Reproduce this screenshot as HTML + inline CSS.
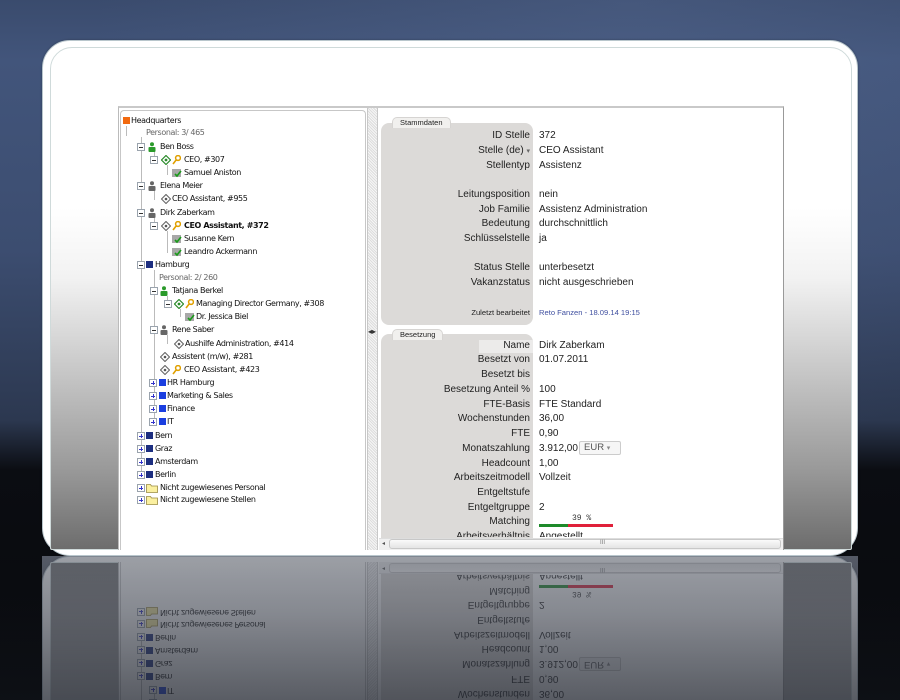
<!DOCTYPE html>
<html><head><meta charset="utf-8">
<style>
*{margin:0;padding:0;box-sizing:border-box}
html,body{width:900px;height:700px;overflow:hidden}
body{position:relative;font-family:"Liberation Sans",Arial,sans-serif;
background:linear-gradient(180deg,#3a4b6d 0px,#42557b 60px,#3c4d70 250px,#2c3850 420px,#0b0d12 470px,#08090c 700px);}
.bgglow{position:absolute;left:0;top:0;width:900px;height:560px;background:radial-gradient(ellipse at 70% 0%,rgba(90,110,150,.35),rgba(0,0,0,0) 60%)}
.scene{position:absolute;left:0;top:0;width:900px;height:560px;overflow:hidden}
.frame{position:absolute;left:42px;top:40px;width:816px;height:516px;border-radius:28px;background:#fff;border:1px solid #b9c6cc;box-shadow:0 0 2px rgba(0,0,0,.3)}
.inner{position:absolute;left:50px;top:47px;width:802px;height:503px;border-radius:22px 22px 2px 2px;border:1px solid #cfdada;
background:linear-gradient(180deg,#fff 0px,#fff 160px,#f2f2f2 230px,#c4c4c4 330px,#9a9a9a 420px,#6c6c6c 503px)}
.app{position:absolute;left:118px;top:106px;width:666px;height:444px;background:#fff;border-top:2px solid #c9c9c9;border-left:1px solid #bbb;border-right:1px solid #999}
.tree{position:absolute;left:120px;top:110px;width:246px;height:440px;border:1px solid #c7c7c7;border-bottom:none;border-radius:4px 4px 0 0;background:#fff}
.split{position:absolute;left:367px;top:108px;width:11px;height:442px;background:repeating-linear-gradient(45deg,#ddd 0 1px,#f6f6f6 1px 2px);border-left:1px solid #c8c8c8;border-right:1px solid #c8c8c8}
.r{position:absolute;height:12px;line-height:12px;font-size:8px;color:#111;white-space:nowrap;font-family:"DejaVu Sans","Liberation Sans",sans-serif;letter-spacing:-.4px}
.ab{position:absolute}
.ex{position:absolute;width:8px;height:8px;border:1px solid #9aa3ad;background:#fff;font-size:0}
.ex:before{content:"";position:absolute;left:1px;top:2.5px;width:4px;height:1px;background:#333}
.ex.p:after{content:"";position:absolute;left:2.5px;top:1px;width:1px;height:4px;background:#33c}
.ex.p:before{background:#33c}
.sq{position:absolute;width:7px;height:7px}
.vl{position:absolute;width:1px;background:#bbb}
.lab{position:absolute;left:381px;width:152px;background:#dcdad8;border-radius:8px}
.tab{position:absolute;height:11px;background:#f1f0ee;border:1px solid #d6d4d2;border-bottom:none;border-radius:5px 5px 0 0;font-size:7.5px;line-height:10px;padding:0 7px;color:#222}
.k{position:absolute;right:370px;font-size:10px;color:#222;white-space:nowrap;line-height:12px}
.v{position:absolute;left:539px;font-size:10px;color:#222;white-space:nowrap;line-height:12px}
.refl{position:absolute;left:0;top:556px;width:900px;height:144px;overflow:hidden}
.refl .scene{transform-origin:0 556px;transform:scaleY(-1);opacity:.42;top:-556px}
.reflbg{position:absolute;left:42px;top:0;width:816px;height:144px;background:linear-gradient(180deg,#555a66,#444955)}
.fade{position:absolute;left:0;top:0;width:900px;height:144px;background:linear-gradient(180deg,rgba(20,24,32,0) 0,rgba(20,24,32,.15) 60px,rgba(20,24,32,.45) 144px)}
</style></head><body>
<div class="bgglow"></div>

<div class="scene" id="sc">
<div class="frame"></div>
<div class="inner"></div>
<div class="app"></div>
<div class="tree"></div>
<div class="split"><div style="position:absolute;left:0;top:220px;font-size:8px;color:#333;line-height:8px">◂▸</div></div>

<div class="vl" style="left:126px;top:126px;height:10px"></div>
<div class="vl" style="left:141px;top:137px;height:338px"></div>
<div class="vl" style="left:154px;top:152px;height:10px"></div>
<div class="vl" style="left:167px;top:165px;height:10px"></div>
<div class="vl" style="left:154px;top:191px;height:9px"></div>
<div class="vl" style="left:154px;top:218px;height:8px"></div>
<div class="vl" style="left:167px;top:231px;height:22px"></div>
<div class="vl" style="left:154px;top:270px;height:152px"></div>
<div class="vl" style="left:167px;top:296px;height:8px"></div>
<div class="vl" style="left:180px;top:309px;height:8px"></div>
<div class="vl" style="left:167px;top:335px;height:9px"></div>

<div class="r" style="top:115px;left:123px"><span class="sq" style="left:0;top:2px;background:#f26a10"></span><span class="ab" style="left:8px">Headquarters</span></div>
<div class="r" style="top:127px;left:146px;color:#666">Personal: 3/ 465</div>
<div class="r" style="top:141px;left:137px"><span class="ex" style="left:0;top:2px"></span><svg class="ab" style="left:11px;top:1px" width="8" height="10"><circle cx="4" cy="2.3" r="2" fill="#2a9a2a"/><rect x="0.5" y="5" width="7" height="5" rx="1" fill="#2a9a2a"/></svg><span class="ab" style="left:23px">Ben Boss</span></div>
<div class="r" style="top:154px;left:150px"><span class="ex" style="left:0;top:2px"></span><svg class="ab" style="left:11px;top:1px" width="10" height="10"><path d="M5 0.5L9.5 5L5 9.5L0.5 5Z" fill="none" stroke="#2a8a2a" stroke-width="1.2"/><circle cx="5" cy="5" r="1.4" fill="#2a8a2a"/></svg><svg class="ab" style="left:22px;top:1px" width="9" height="10"><circle cx="6" cy="3" r="2.4" fill="none" stroke="#e0a000" stroke-width="1.5"/><path d="M4.5 4.5L1 9" stroke="#e0a000" stroke-width="1.6"/></svg><span class="ab" style="left:34px">CEO, #307</span></div>
<div class="r" style="top:167px;left:172px"><svg class="ab" style="left:0;top:1px" width="10" height="10"><rect x="0" y="1" width="9" height="8" fill="#a8a8a8"/><path d="M3 6L5 8L9 3" stroke="#1a9a1a" stroke-width="1.6" fill="none"/></svg><span class="ab" style="left:12px">Samuel Aniston</span></div>
<div class="r" style="top:180px;left:137px"><span class="ex" style="left:0;top:2px"></span><svg class="ab" style="left:11px;top:1px" width="8" height="10"><circle cx="4" cy="2.3" r="2" fill="#666"/><rect x="0.5" y="5" width="7" height="5" rx="1" fill="#666"/></svg><span class="ab" style="left:23px">Elena Meier</span></div>
<div class="r" style="top:193px;left:161px"><svg class="ab" style="left:0;top:1px" width="10" height="10"><path d="M5 0.5L9.5 5L5 9.5L0.5 5Z" fill="none" stroke="#666" stroke-width="1.1"/><circle cx="5" cy="5" r="1.3" fill="#555"/></svg><span class="ab" style="left:11px">CEO Assistant, #955</span></div>
<div class="r" style="top:207px;left:137px"><span class="ex" style="left:0;top:2px"></span><svg class="ab" style="left:11px;top:1px" width="8" height="10"><circle cx="4" cy="2.3" r="2" fill="#666"/><rect x="0.5" y="5" width="7" height="5" rx="1" fill="#666"/></svg><span class="ab" style="left:23px">Dirk Zaberkam</span></div>
<div class="r" style="top:220px;left:150px"><span class="ex" style="left:0;top:2px"></span><svg class="ab" style="left:11px;top:1px" width="10" height="10"><path d="M5 0.5L9.5 5L5 9.5L0.5 5Z" fill="none" stroke="#666" stroke-width="1.1"/><circle cx="5" cy="5" r="1.3" fill="#555"/></svg><svg class="ab" style="left:22px;top:1px" width="9" height="10"><circle cx="6" cy="3" r="2.4" fill="none" stroke="#e0a000" stroke-width="1.5"/><path d="M4.5 4.5L1 9" stroke="#e0a000" stroke-width="1.6"/></svg><span class="ab" style="left:34px;font-weight:bold">CEO Assistant, #372</span></div>
<div class="r" style="top:233px;left:172px"><svg class="ab" style="left:0;top:1px" width="10" height="10"><rect x="0" y="1" width="9" height="8" fill="#a8a8a8"/><path d="M3 6L5 8L9 3" stroke="#1a9a1a" stroke-width="1.6" fill="none"/></svg><span class="ab" style="left:12px">Susanne Kern</span></div>
<div class="r" style="top:246px;left:172px"><svg class="ab" style="left:0;top:1px" width="10" height="10"><rect x="0" y="1" width="9" height="8" fill="#a8a8a8"/><path d="M3 6L5 8L9 3" stroke="#1a9a1a" stroke-width="1.6" fill="none"/></svg><span class="ab" style="left:12px">Leandro Ackermann</span></div>
<div class="r" style="top:259px;left:137px"><span class="ex" style="left:0;top:2px"></span><span class="sq" style="left:9px;top:2px;background:#1c2e80"></span><span class="ab" style="left:18px">Hamburg</span></div>
<div class="r" style="top:272px;left:159px;color:#666">Personal: 2/ 260</div>
<div class="r" style="top:285px;left:150px"><span class="ex" style="left:0;top:2px"></span><svg class="ab" style="left:10px;top:1px" width="8" height="10"><circle cx="4" cy="2.3" r="2" fill="#2a9a2a"/><rect x="0.5" y="5" width="7" height="5" rx="1" fill="#2a9a2a"/></svg><span class="ab" style="left:22px">Tatjana Berkel</span></div>
<div class="r" style="top:298px;left:164px"><span class="ex" style="left:0;top:2px"></span><svg class="ab" style="left:10px;top:1px" width="10" height="10"><path d="M5 0.5L9.5 5L5 9.5L0.5 5Z" fill="none" stroke="#2a8a2a" stroke-width="1.2"/><circle cx="5" cy="5" r="1.4" fill="#2a8a2a"/></svg><svg class="ab" style="left:21px;top:1px" width="9" height="10"><circle cx="6" cy="3" r="2.4" fill="none" stroke="#e0a000" stroke-width="1.5"/><path d="M4.5 4.5L1 9" stroke="#e0a000" stroke-width="1.6"/></svg><span class="ab" style="left:32px">Managing Director Germany, #308</span></div>
<div class="r" style="top:311px;left:185px"><svg class="ab" style="left:0;top:1px" width="10" height="10"><rect x="0" y="1" width="9" height="8" fill="#a8a8a8"/><path d="M3 6L5 8L9 3" stroke="#1a9a1a" stroke-width="1.6" fill="none"/></svg><span class="ab" style="left:11px">Dr. Jessica Biel</span></div>
<div class="r" style="top:324px;left:150px"><span class="ex" style="left:0;top:2px"></span><svg class="ab" style="left:10px;top:1px" width="8" height="10"><circle cx="4" cy="2.3" r="2" fill="#666"/><rect x="0.5" y="5" width="7" height="5" rx="1" fill="#666"/></svg><span class="ab" style="left:22px">Rene Saber</span></div>
<div class="r" style="top:338px;left:174px"><svg class="ab" style="left:0;top:1px" width="10" height="10"><path d="M5 0.5L9.5 5L5 9.5L0.5 5Z" fill="none" stroke="#666" stroke-width="1.1"/><circle cx="5" cy="5" r="1.3" fill="#555"/></svg><span class="ab" style="left:11px">Aushilfe Administration, #414</span></div>
<div class="r" style="top:351px;left:160px"><svg class="ab" style="left:0;top:1px" width="10" height="10"><path d="M5 0.5L9.5 5L5 9.5L0.5 5Z" fill="none" stroke="#666" stroke-width="1.1"/><circle cx="5" cy="5" r="1.3" fill="#555"/></svg><span class="ab" style="left:12px">Assistent (m/w), #281</span></div>
<div class="r" style="top:364px;left:160px"><svg class="ab" style="left:0;top:1px" width="10" height="10"><path d="M5 0.5L9.5 5L5 9.5L0.5 5Z" fill="none" stroke="#666" stroke-width="1.1"/><circle cx="5" cy="5" r="1.3" fill="#555"/></svg><svg class="ab" style="left:12px;top:1px" width="9" height="10"><circle cx="6" cy="3" r="2.4" fill="none" stroke="#e0a000" stroke-width="1.5"/><path d="M4.5 4.5L1 9" stroke="#e0a000" stroke-width="1.6"/></svg><span class="ab" style="left:24px">CEO Assistant, #423</span></div>
<div class="r" style="top:377px;left:149px"><span class="ex p" style="left:0;top:2px"></span><span class="sq" style="left:10px;top:2px;background:#1a3ee0"></span><span class="ab" style="left:18px">HR Hamburg</span></div>
<div class="r" style="top:390px;left:149px"><span class="ex p" style="left:0;top:2px"></span><span class="sq" style="left:10px;top:2px;background:#1a3ee0"></span><span class="ab" style="left:18px">Marketing &amp; Sales</span></div>
<div class="r" style="top:403px;left:149px"><span class="ex p" style="left:0;top:2px"></span><span class="sq" style="left:10px;top:2px;background:#1a3ee0"></span><span class="ab" style="left:18px">Finance</span></div>
<div class="r" style="top:416px;left:149px"><span class="ex p" style="left:0;top:2px"></span><span class="sq" style="left:10px;top:2px;background:#1a3ee0"></span><span class="ab" style="left:18px">IT</span></div>
<div class="r" style="top:430px;left:137px"><span class="ex p" style="left:0;top:2px"></span><span class="sq" style="left:9px;top:2px;background:#1c2e80"></span><span class="ab" style="left:18px">Bern</span></div>
<div class="r" style="top:443px;left:137px"><span class="ex p" style="left:0;top:2px"></span><span class="sq" style="left:9px;top:2px;background:#1c2e80"></span><span class="ab" style="left:18px">Graz</span></div>
<div class="r" style="top:456px;left:137px"><span class="ex p" style="left:0;top:2px"></span><span class="sq" style="left:9px;top:2px;background:#1c2e80"></span><span class="ab" style="left:18px">Amsterdam</span></div>
<div class="r" style="top:469px;left:137px"><span class="ex p" style="left:0;top:2px"></span><span class="sq" style="left:9px;top:2px;background:#1c2e80"></span><span class="ab" style="left:18px">Berlin</span></div>
<div class="r" style="top:482px;left:137px"><span class="ex p" style="left:0;top:2px"></span><svg class="ab" style="left:9px;top:0" width="12" height="11"><path d="M0.5 2.5h4l1 1.5h6v6.5h-11z" fill="#fbf0a0" stroke="#9a8a40" stroke-width="0.8"/></svg><span class="ab" style="left:23px">Nicht zugewiesenes Personal</span></div>
<div class="r" style="top:494px;left:137px"><span class="ex p" style="left:0;top:2px"></span><svg class="ab" style="left:9px;top:0" width="12" height="11"><path d="M0.5 2.5h4l1 1.5h6v6.5h-11z" fill="#fbf0a0" stroke="#9a8a40" stroke-width="0.8"/></svg><span class="ab" style="left:23px">Nicht zugewiesene Stellen</span></div>

<div class="lab" style="top:123px;height:202px"></div>
<div class="tab" style="left:392px;top:117px">Stammdaten</div>
<div class="k" style="top:130px">ID Stelle</div><div class="v" style="top:130px">372</div>
<div class="k" style="top:145px">Stelle (de) <span style="font-size:7px;color:#666">▾</span></div><div class="v" style="top:145px">CEO Assistant</div>
<div class="k" style="top:160px">Stellentyp</div><div class="v" style="top:160px">Assistenz</div>
<div class="k" style="top:189px">Leitungsposition</div><div class="v" style="top:189px">nein</div>
<div class="k" style="top:204px">Job Familie</div><div class="v" style="top:204px">Assistenz Administration</div>
<div class="k" style="top:218px">Bedeutung</div><div class="v" style="top:218px">durchschnittlich</div>
<div class="k" style="top:233px">Schlüsselstelle</div><div class="v" style="top:233px">ja</div>
<div class="k" style="top:262px">Status Stelle</div><div class="v" style="top:262px">unterbesetzt</div>
<div class="k" style="top:277px">Vakanzstatus</div><div class="v" style="top:277px">nicht ausgeschrieben</div>
<div class="k" style="top:307px;font-size:7.6px">Zuletzt bearbeitet</div><div class="v" style="top:307px;font-size:7.6px;color:#4050a0">Reto Fanzen - 18.09.14 19:15</div>

<div class="lab" style="top:334px;height:216px;border-radius:8px 8px 0 0"></div>
<div class="tab" style="left:392px;top:329px">Besetzung</div>
<div class="ab" style="left:479px;top:340px;width:54px;height:13px;background:#ecebea"></div>
<div class="k" style="top:340px">Name</div><div class="v" style="top:340px">Dirk Zaberkam</div>
<div class="k" style="top:354px">Besetzt von</div><div class="v" style="top:354px">01.07.2011</div>
<div class="k" style="top:369px">Besetzt bis</div>
<div class="k" style="top:384px">Besetzung Anteil %</div><div class="v" style="top:384px">100</div>
<div class="k" style="top:399px">FTE-Basis</div><div class="v" style="top:399px">FTE Standard</div>
<div class="k" style="top:413px">Wochenstunden</div><div class="v" style="top:413px">36,00</div>
<div class="k" style="top:428px">FTE</div><div class="v" style="top:428px">0,90</div>
<div class="k" style="top:443px">Monatszahlung</div><div class="v" style="top:443px">3.912,00</div>
<div class="ab" style="left:579px;top:441px;width:42px;height:14px;border:1px solid #ccc;border-radius:2px;background:#f6f6f6;font-size:9.5px;color:#555;line-height:12px;padding-left:4px">EUR <span style="font-size:7px;color:#888">▾</span></div>
<div class="k" style="top:458px">Headcount</div><div class="v" style="top:458px">1,00</div>
<div class="k" style="top:472px">Arbeitszeitmodell</div><div class="v" style="top:472px">Vollzeit</div>
<div class="k" style="top:487px">Entgeltstufe</div>
<div class="k" style="top:502px">Entgeltgruppe</div><div class="v" style="top:502px">2</div>
<div class="k" style="top:516px">Matching</div>
<div class="ab" style="left:572px;top:514px;font-size:8px;color:#333;font-family:'Liberation Mono',monospace">39 %</div>
<div class="ab" style="left:539px;top:524px;width:29px;height:3px;background:#1e8a2a"></div>
<div class="ab" style="left:568px;top:524px;width:45px;height:3px;background:#e0203a"></div>
<div class="k" style="top:531px;height:6px;overflow:hidden">Arbeitsverhältnis</div><div class="v" style="top:531px;height:6px;overflow:hidden">Angestellt</div>
<div class="ab" style="left:379px;top:538px;width:404px;height:12px;background:#f0f0f0;border-top:1px solid #ddd"></div>
<div class="ab" style="left:382px;top:540px;font-size:6px;color:#555">◂</div>
<div class="ab" style="left:389px;top:539px;width:392px;height:10px;border:1px solid #c8c8c8;border-radius:3px;background:linear-gradient(#fafafa,#e4e4e4)"></div>
<div class="ab" style="left:600px;top:540px;font-size:6px;color:#777">III</div>
</div>

<div class="refl">
<div class="reflbg"></div>
<div class="scene" id="rs"></div>
<div class="fade"></div>
</div>
<script>
document.getElementById('rs').innerHTML=document.getElementById('sc').innerHTML;
</script>
</body></html>
